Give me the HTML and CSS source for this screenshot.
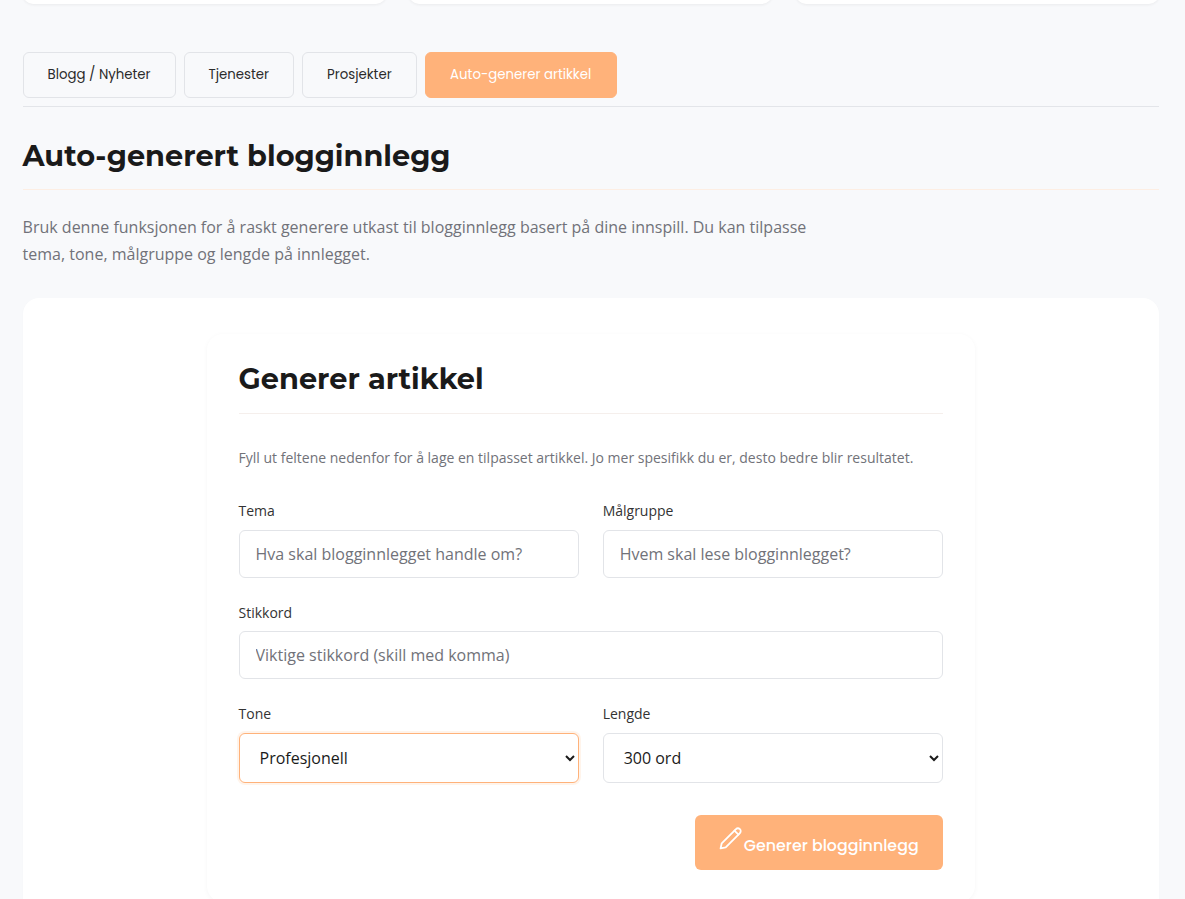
FILE: index.html
```html
<!DOCTYPE html>
<html lang="en">
<head>
    <meta charset="UTF-8">
    <meta name="viewport" content="width=device-width, initial-scale=1.0">
    <title>Auto-generert blogginnlegg</title>
    <link rel="stylesheet" href="styles.css">
</head>
<body>
    <div class="wrapper">
        <div class="stat-row">
            <div class="stat-card"></div>
            <div class="stat-card"></div>
            <div class="stat-card"></div>
        </div>

        <nav class="tabs">
            <button class="tab">Blogg / Nyheter</button>
            <button class="tab">Tjenester</button>
            <button class="tab">Prosjekter</button>
            <button class="tab active">Auto-generer artikkel</button>
        </nav>

        <h1 class="page-title">Auto-generert blogginnlegg</h1>
        <p class="intro">Bruk denne funksjonen for å raskt generere utkast til blogginnlegg basert på dine innspill. Du kan tilpasse tema, tone, målgruppe og lengde på innlegget.</p>

        <div class="panel">
            <form class="form-card">
                <h2 class="form-title">Generer artikkel</h2>
                <p class="form-help">Fyll ut feltene nedenfor for å lage en tilpasset artikkel. Jo mer spesifikk du er, desto bedre blir resultatet.</p>

                <div class="form-row">
                    <div class="field">
                        <label for="tema">Tema</label>
                        <input type="text" id="tema" placeholder="Hva skal blogginnlegget handle om?">
                    </div>
                    <div class="field">
                        <label for="malgruppe">Målgruppe</label>
                        <input type="text" id="malgruppe" placeholder="Hvem skal lese blogginnlegget?">
                    </div>
                </div>

                <div class="form-row">
                    <div class="field">
                        <label for="stikkord">Stikkord</label>
                        <input type="text" id="stikkord" placeholder="Viktige stikkord (skill med komma)">
                    </div>
                </div>

                <div class="form-row">
                    <div class="field">
                        <label for="tone">Tone</label>
                        <select id="tone" class="focused">
                            <option>Profesjonell</option>
                        </select>
                    </div>
                    <div class="field">
                        <label for="lengde">Lengde</label>
                        <select id="lengde">
                            <option>300 ord</option>
                        </select>
                    </div>
                </div>

                <div class="form-actions">
                    <button type="button" class="submit">
                        <svg class="pencil" viewBox="0 0 22 22" fill="none" stroke="currentColor" stroke-width="1.7" stroke-linejoin="round" stroke-linecap="round" aria-hidden="true">
                            <path d="M1.5 20.5 L2.6 15.6 L16 2.2 C17.2 1 18.9 1 20 2 C21.1 3.1 21 4.8 19.8 6 L6.4 19.4 Z"/>
                            <path d="M14.8 3.4 L18.6 7.2"/>
                        </svg>
                        Generer blogginnlegg
                    </button>
                </div>
            </form>
        </div>
    </div>
</body>
</html>
```

FILE: styles.css
```css
* {
    box-sizing: border-box;
}

body {
    margin: 0;
    height: 899px;
    overflow: hidden;
    background: #f8f9fb;
    font-family: "Open Sans", sans-serif;
    color: #1a1a1a;
}

.wrapper {
    padding: 0 26px 0 22.6px;
}

.stat-row {
    display: grid;
    grid-template-columns: repeat(3, 1fr);
    gap: 23.6px;
    margin-top: -16px;
}

.stat-card {
    height: 20px;
    background: #fff;
    border-radius: 16px;
    box-shadow: 0 1px 3px rgba(0, 0, 0, 0.06);
}

.tabs {
    display: flex;
    gap: 8px;
    margin-top: 48px;
    padding-bottom: 8px;
    border-bottom: 1px solid #e3e5e9;
}

.tab {
    height: 46px;
    padding: 0 24px;
    background: #f8f9fb;
    border: 1px solid #e2e4e8;
    border-radius: 6px;
    font-family: "Poppins", "Inter", sans-serif;
    font-size: 13.3px;
    color: #2b2b2b;
}

.tab.active {
    padding: 0 24.5px;
    background: #ffb27a;
    border-color: #ffb27a;
    color: #fff;
}

.page-title {
    margin: 0;
    padding: 30px 0 15px;
    border-bottom: 1px solid #fdeee3;
    font-family: "Montserrat", "Inter", sans-serif;
    font-size: 28.8px;
    line-height: 37px;
    font-weight: 700;
}

.intro {
    max-width: 800px;
    margin: 24px 0 30px;
    font-size: 16px;
    line-height: 27px;
    color: #717279;
}

.panel {
    background: #fff;
    border-radius: 16px;
    padding: 36px 184.3px 0 184.1px;
    box-shadow: 0 1px 3px rgba(0, 0, 0, 0.02);
    height: 640px;
}

.form-card {
    height: 568px;
    padding: 24px 32px 0 31.85px;
    border-radius: 16px;
    box-shadow: 0 1px 5px rgba(0, 0, 0, 0.04);
}

.form-title {
    margin: 0;
    padding-bottom: 13px;
    border-bottom: 1px solid #f5efec;
    font-family: "Montserrat", "Inter", sans-serif;
    font-size: 28.8px;
    line-height: 42px;
    font-weight: 700;
}

.form-help {
    margin: 33px 0 32.3px;
    font-size: 14px;
    line-height: 21px;
    color: #717279;
}

.form-row {
    display: flex;
    gap: 24px;
    margin-bottom: 24.1px;
}

.field {
    flex: 1;
    min-width: 0;
}

.field label {
    display: block;
    margin-bottom: 8px;
    font-size: 14px;
    line-height: 21.4px;
    color: #333;
}

.field input,
.field select {
    display: block;
    width: 100%;
    height: 48px;
    padding: 0 16px;
    background: #fff;
    border: 1px solid #e2e4e8;
    border-radius: 6px;
    font-family: "Open Sans", sans-serif;
    font-size: 16px;
    color: #1a1a1a;
}

.field input::placeholder {
    color: #717279;
}

.field select {
    height: 50px;
}

.field select.focused {
    border-color: #ffb27a;
    box-shadow: 0 0 0 2px rgba(255, 178, 122, 0.15);
}

.form-actions {
    display: flex;
    justify-content: flex-end;
    margin-top: 32px;
}

.submit {
    display: flex;
    align-items: flex-end;
    justify-content: center;
    gap: 2px;
    width: 248px;
    height: 55px;
    padding: 0 0 12px;
    background: #ffb27a;
    border: 0;
    border-radius: 6px;
    font-family: "Poppins", "Inter", sans-serif;
    font-size: 15.85px;
    font-weight: 500;
    color: #fff;
}

.pencil {
    width: 23px;
    height: 23px;
    margin-bottom: 8px;
}
```
